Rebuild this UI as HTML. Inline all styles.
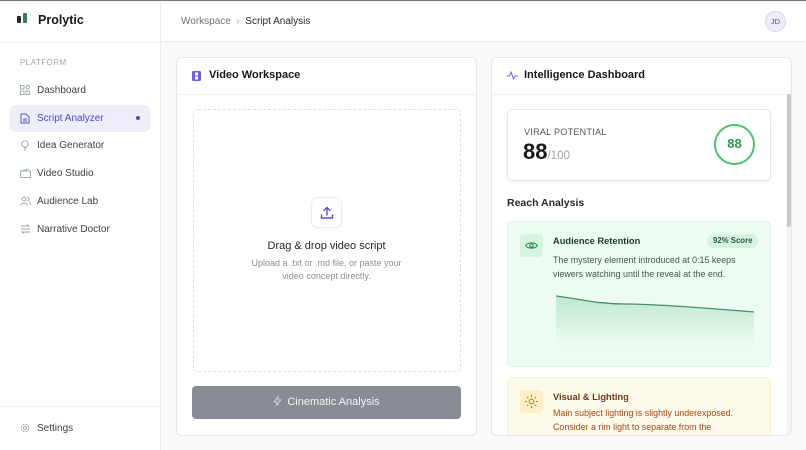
<!DOCTYPE html>
<html><head><style>
*{box-sizing:border-box;margin:0;padding:0}
body{width:806px;height:449px;overflow:hidden;font-family:"Liberation Sans",sans-serif;background:#fafafa;position:relative;border-top:1px solid #777}
.abs{position:absolute}
.side{left:0;top:1px;width:161px;height:448px;background:#fff;border-right:1px solid #ececef}
.nav{position:absolute;left:10px;width:140px;height:27px;border-radius:5px;font-size:10px;color:#3f3f46;display:flex;align-items:center;padding-left:27px}
.nav svg{position:absolute;left:10px;top:8px}
.panel{background:#fff;border:1px solid #e7e7ea;border-radius:6px}
</style></head><body>
<div class="abs side">
 <div class="abs" style="left:17px;top:14px;width:4px;height:7px;background:#1f2937;border-radius:1px"></div>
 <div class="abs" style="left:23px;top:11px;width:4px;height:10px;background:#2e7d5b;border-radius:1px"></div>
 <div class="abs" style="left:38px;top:11px;font-size:12.5px;font-weight:bold;color:#18181b">Prolytic</div>
 <div class="abs" style="left:0;top:40px;width:160px;border-top:1px solid #f0f0f2"></div>
 <div class="abs" style="left:20px;top:56px;font-size:7.8px;letter-spacing:.6px;color:#9ca3af">PLATFORM</div>
 <div class="nav" style="top:75px"><svg width="10" height="10" viewBox="0 0 10 10" fill="none" stroke="#9ca3af" stroke-width=".9"><rect x=".5" y=".5" width="3.5" height="3.5"/><rect x="6" y=".5" width="3.5" height="3.5" rx="1.7"/><rect x=".5" y="6" width="3.5" height="3.5"/><rect x="6" y="6" width="3.5" height="3.5"/></svg>Dashboard</div>
 <div class="nav" style="top:103px;background:#eeeefb;color:#4f46c8"><svg width="10" height="11" viewBox="0 0 10 11" fill="none" stroke="#5b50d6" stroke-width="1"><path d="M1 1h5l3 3v6H1z"/><path d="M3 6h4M3 8h4"/></svg>Script Analyzer<span class="abs" style="left:126px;top:11px;width:4px;height:4px;border-radius:2px;background:#4f46c8"></span></div>
 <div class="nav" style="top:130px"><svg width="10" height="11" viewBox="0 0 10 11" fill="none" stroke="#9ca3af" stroke-width=".9"><circle cx="5" cy="4" r="3.2"/><path d="M3.8 8h2.4M4 10h2"/></svg>Idea Generator</div>
 <div class="nav" style="top:158px"><svg width="11" height="10" viewBox="0 0 11 10" fill="none" stroke="#9ca3af" stroke-width=".9"><rect x=".5" y="3" width="10" height="6.5"/><path d="M1 3l8-2"/></svg>Video Studio</div>
 <div class="nav" style="top:186px"><svg width="11" height="10" viewBox="0 0 11 10" fill="none" stroke="#9ca3af" stroke-width=".9"><circle cx="4" cy="3" r="2"/><path d="M.5 9.5c0-3 7-3 7 0M7 1a2 2 0 010 4M9 6c1 .5 1.5 2 1.5 3"/></svg>Audience Lab</div>
 <div class="nav" style="top:214px"><svg width="11" height="10" viewBox="0 0 11 10" fill="none" stroke="#9ca3af" stroke-width=".9"><path d="M1 2h8l-2-1.5M10 8H2l2 1.5M1 5h9"/></svg>Narrative Doctor</div>
 <div class="abs" style="left:0;top:404px;width:160px;border-top:1px solid #f0f0f2"></div>
 <div class="nav" style="top:413px"><svg width="10" height="10" viewBox="0 0 10 10" fill="none" stroke="#9ca3af" stroke-width=".9"><circle cx="5" cy="5" r="1.6"/><circle cx="5" cy="5" r="3.8" stroke-dasharray="2 1"/></svg>Settings</div>
</div>
<div class="abs" style="left:161px;top:1px;width:645px;height:40px;background:#fff;border-bottom:1px solid #ececef"></div>
<div class="abs" style="left:181px;top:15px;font-size:10px;color:#71717a">Workspace &nbsp;<span style="color:#a1a1aa">›</span>&nbsp; <span style="color:#27272a">Script Analysis</span></div>
<div class="abs" style="left:765px;top:10px;width:21px;height:21px;border-radius:50%;background:#ececfb;border:1px solid #d4d4f0;font-size:7.5px;color:#4f46c8;text-align:center;line-height:19px">JD</div>

<div class="abs panel" style="left:176px;top:56px;width:301px;height:379px">
 <div style="height:37px;border-bottom:1px solid #efeff1;padding:11px 0 0 32px;font-size:11px;font-weight:bold;color:#18181b;position:relative">
  <svg class="abs" style="left:15px;top:13px" width="9" height="10" viewBox="0 0 9 10"><rect width="9" height="10" rx="1.5" fill="#6d5fe0"/><rect x="3" y="1.5" width="3" height="3" fill="#fff"/><rect x="3" y="5.5" width="3" height="3" fill="#fff"/></svg>Video Workspace</div>
 <div class="abs" style="left:16px;top:51px;width:268px;height:263px;border:1px dashed #dadfea;border-radius:5px;background:#fff"></div>
 <div class="abs" style="left:134px;top:139px;width:31px;height:31px;border:1px solid #ececef;border-radius:7px;box-shadow:0 1px 2px rgba(0,0,0,.05);background:#fff"><svg style="margin:8px" width="14" height="14" viewBox="0 0 14 14" fill="none" stroke="#5b50d6" stroke-width="1.4" stroke-linecap="round"><path d="M7 9V1.5M4 4.5l3-3 3 3M1.5 9v3h11V9"/></svg></div>
 <div class="abs" style="left:0;width:299px;top:182px;text-align:center;font-size:11px;color:#27272a">Drag &amp; drop video script</div>
 <div class="abs" style="left:0;width:299px;top:199px;text-align:center;font-size:9px;line-height:13px;color:#8b8f99">Upload a .txt or .md file, or paste your<br>video concept directly.</div>
 <div class="abs" style="left:15px;top:328px;width:269px;height:33px;background:#898c93;border-radius:4px;color:#f3f4f6;font-size:11px;text-align:center;line-height:33px"><svg style="vertical-align:-1px;margin-right:5px" width="9" height="10" viewBox="0 0 9 10" fill="none" stroke="#d4d4d8" stroke-width=".9"><path d="M5 .5L1 6h3l-.5 3.5L8 4H5z"/></svg>Cinematic Analysis</div>
</div>

<div class="abs panel" style="left:491px;top:56px;width:301px;height:379px;overflow:hidden">
 <div style="height:37px;border-bottom:1px solid #efeff1;padding:11px 0 0 32px;font-size:11px;font-weight:bold;color:#18181b;position:relative">
  <svg class="abs" style="left:15px;top:13px" width="11" height="9" viewBox="0 0 11 9" fill="none" stroke="#6d5fe0" stroke-width="1"><path d="M0 5h2.5L4 1l2.5 7L8 5h3"/></svg>Intelligence Dashboard</div>
 <div class="abs" style="left:294px;top:36px;width:6px;height:345px;background:#f4f4f6"></div>
 <div class="abs" style="left:295px;top:36px;width:4px;height:133px;background:#c9c9cd;border-radius:2px"></div>
 <div class="abs" style="left:15px;top:51px;width:264px;height:72px;border:1px solid #e7e7ea;border-radius:5px;box-shadow:0 1px 3px rgba(0,0,0,.06)">
  <div class="abs" style="left:16px;top:17px;font-size:9px;letter-spacing:.3px;color:#52525b">VIRAL POTENTIAL</div>
  <div class="abs" style="left:15px;top:29px;font-size:22px;font-weight:bold;color:#18181b">88<span style="font-size:11.5px;font-weight:normal;color:#a1a1aa">/100</span></div>
  <div class="abs" style="left:206px;top:14px;width:41px;height:41px;border:2.5px solid #4cc26b;border-radius:50%;text-align:center;line-height:36px;font-size:13px;color:#2e9a55;font-weight:bold">88</div>
 </div>
 <div class="abs" style="left:15px;top:139px;font-size:10.5px;font-weight:bold;color:#27272a">Reach Analysis</div>
 <div class="abs" style="left:15px;top:163px;width:264px;height:146px;background:#ecfcf2;border:1px solid #dff3e6;border-radius:5px">
  <div class="abs" style="left:12px;top:12px;width:23px;height:23px;background:#d5f3df;border-radius:4px"><svg style="margin:6px 5px" width="13" height="11" viewBox="0 0 13 11" fill="none" stroke="#2f8a55" stroke-width="1.1"><path d="M.7 5.5C2.5 2 10.5 2 12.3 5.5 10.5 9 2.5 9 .7 5.5z"/><circle cx="6.5" cy="5.5" r="1.7"/></svg></div>
  <div class="abs" style="left:45px;top:14px;font-size:9.3px;font-weight:bold;color:#1f3a2c">Audience Retention</div>
  <div class="abs" style="left:199px;top:12px;padding:0 6px;height:14px;line-height:14px;background:#d7f3e0;border-radius:7px;font-size:7.8px;font-weight:bold;color:#2b5a3f">92% Score</div>
  <div class="abs" style="left:45px;top:31px;font-size:8.9px;line-height:14px;color:#3f5a4a">The mystery element introduced at 0:15 keeps<br>viewers watching until the reveal at the end.</div>
  <svg class="abs" style="left:48px;top:70px" width="200" height="55" viewBox="0 0 200 55"><defs><linearGradient id="g" x1="0" y1="0" x2="0" y2="1"><stop offset="0" stop-color="#bfe8cf"/><stop offset="1" stop-color="#ecfcf2"/></linearGradient></defs><path d="M0 4C25 7 40 12 70 12S150 16 198 20V55H0z" fill="url(#g)"/><path d="M0 4C25 7 40 12 70 12S150 16 198 20" fill="none" stroke="#4a8f6a" stroke-width="1.3"/></svg>
 </div>
 <div class="abs" style="left:15px;top:319px;width:264px;height:70px;background:#fefaea;border:1px solid #f8efd3;border-radius:5px">
  <div class="abs" style="left:12px;top:12px;width:23px;height:23px;background:#fdf0c6;border-radius:4px"><svg style="margin:5px" width="13" height="13" viewBox="0 0 13 13" fill="none" stroke="#b7791f" stroke-width="1"><circle cx="6.5" cy="6.5" r="2.3"/><path d="M6.5 0v2M6.5 11v2M0 6.5h2M11 6.5h2M2 2l1.3 1.3M9.7 9.7L11 11M2 11l1.3-1.3M9.7 3.3L11 2"/></svg></div>
  <div class="abs" style="left:45px;top:14px;font-size:9.3px;font-weight:bold;color:#6b3a1a">Visual &amp; Lighting</div>
  <div class="abs" style="left:45px;top:28px;font-size:8.9px;line-height:14px;color:#9a4a1a">Main subject lighting is slightly underexposed.<br>Consider a rim light to separate from the</div>
 </div>
</div>
</body></html>
